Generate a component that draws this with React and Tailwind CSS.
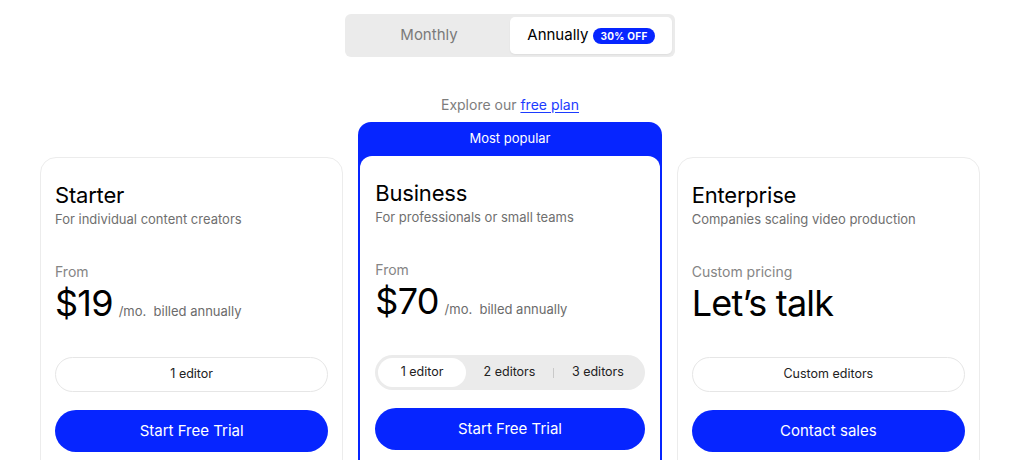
import React, { useState } from "react";

const BLUE = "bg-[#0625ff]";

const PriceBlock = ({ label, price, suffix }) => (
  <div className="mt-[34px]">
    <p className="text-[14px] leading-[20px] text-[#858585]">{label}</p>
    <div className="mt-[1px] flex items-baseline">
      <span className="text-[36px] leading-[40px] text-black tracking-[-0.8px]">
        {price}
      </span>
      {suffix && (
        <span className="ml-[6px] whitespace-pre text-[13px] text-[#6b6b6b]">
          {suffix}
        </span>
      )}
    </div>
  </div>
);

const CardBody = ({ title, subtitle, children, cta }) => (
  <div className="flex flex-col px-[14px] pt-[23px] pb-[30px]">
    <h3 className="text-[22px] leading-[28px] text-black tracking-[-0.2px]">
      {title}
    </h3>
    <p className="mt-[1px] text-[13px] leading-[18px] text-[#6f6f6f]">
      {subtitle}
    </p>
    {children}
    <button
      className={`mt-[18px] h-[42px] w-full rounded-full ${BLUE} text-[15px] text-white`}
    >
      {cta}
    </button>
  </div>
);

const Pill = ({ text }) => (
  <div className="mt-[34px] flex h-[35px] items-center justify-center rounded-full border border-[#e6e6e6] text-[12.5px] text-[#222]">
    {text}
  </div>
);

const App = () => {
  const [billing, setBilling] = useState("annual");
  const [editors, setEditors] = useState(1);

  return (
    <div
      className="h-[460px] w-[1024px] overflow-hidden bg-white"
      style={{ fontFamily: "Inter, 'Noto Sans', sans-serif" }}
    >
      {/* Billing toggle */}
      <div className="flex justify-center pt-[14px]">
        <div className="ml-[-4px] flex h-[43px] w-[330px] rounded-[6px] bg-[#ebebeb] p-[3px]">
          <button
            onClick={() => setBilling("month")}
            className={`flex flex-1 items-center justify-center rounded-[5px] text-[15px] ${
              billing === "month" ? "bg-white text-black" : "text-[#7a7a7a]"
            }`}
          >
            Monthly
          </button>
          <button
            onClick={() => setBilling("annual")}
            className={`flex flex-1 items-center justify-center gap-[5px] rounded-[5px] text-[15px] ${
              billing === "annual"
                ? "bg-white text-black shadow-[0_1px_2px_rgba(0,0,0,0.06)]"
                : "text-[#7a7a7a]"
            }`}
          >
            Annually
            <span
              className={`rounded-full ${BLUE} px-[7px] py-[1px] text-[10px] font-bold leading-[14px] text-white tracking-[0.3px]`}
            >
              30% OFF
            </span>
          </button>
        </div>
      </div>

      {/* Free plan link */}
      <p className="mt-[38px] ml-[-4px] text-center text-[14px] leading-[20px] text-[#7d7d7d]">
        Explore our{" "}
        <a href="#" className="text-[#1c3bff] underline underline-offset-2">
          free plan
        </a>
      </p>

      {/* Plans */}
      <div className="ml-[40px] mt-[7px] grid w-[940px] grid-cols-3 items-start gap-[15px]">
        {/* Starter */}
        <div className="mt-[35px] rounded-[16px] border border-[#ececec] bg-white">
          <CardBody
            title="Starter"
            subtitle="For individual content creators"
            cta="Start Free Trial"
          >
            <PriceBlock
              label="From"
              price="$19"
              suffix={"/mo.  billed annually"}
            />
            <Pill text="1 editor" />
          </CardBody>
        </div>

        {/* Business */}
        <div className={`rounded-t-[13px] ${BLUE} px-[2px]`}>
          <div className="flex h-[34px] items-center justify-center text-[13px] text-white">
            Most popular
          </div>
          <div className="rounded-t-[12px] bg-white">
            <div className="flex flex-col px-[15px] pt-[23px] pb-[30px]">
              <h3 className="text-[22px] leading-[28px] text-black tracking-[-0.2px]">
                Business
              </h3>
              <p className="mt-[1px] text-[13px] leading-[18px] text-[#6f6f6f]">
                For professionals or small teams
              </p>
              <PriceBlock
                label="From"
                price="$70"
                suffix={"/mo.  billed annually"}
              />
              <div className="mt-[34px] flex h-[35px] items-center rounded-full bg-[#ebebeb] p-[3px] text-[12.5px] text-[#222]">
                {[1, 2, 3].map((n, i) => (
                  <React.Fragment key={n}>
                    {i === 2 && editors === 1 && (
                      <span className="h-[10px] w-px bg-[#c9c9c9]" />
                    )}
                    <button
                      onClick={() => setEditors(n)}
                      className={`flex h-full flex-1 items-center justify-center rounded-full ${
                        editors === n ? "bg-white" : ""
                      }`}
                    >
                      {n === 1 ? "1 editor" : `${n} editors`}
                    </button>
                  </React.Fragment>
                ))}
              </div>
              <button
                className={`mt-[18px] h-[42px] w-full rounded-full ${BLUE} text-[15px] text-white`}
              >
                Start Free Trial
              </button>
            </div>
          </div>
        </div>

        {/* Enterprise */}
        <div className="mt-[35px] rounded-[16px] border border-[#ececec] bg-white">
          <CardBody
            title="Enterprise"
            subtitle="Companies scaling video production"
            cta="Contact sales"
          >
            <PriceBlock label="Custom pricing" price="Let’s talk" />
            <Pill text="Custom editors" />
          </CardBody>
        </div>
      </div>
    </div>
  );
};

export default App;
